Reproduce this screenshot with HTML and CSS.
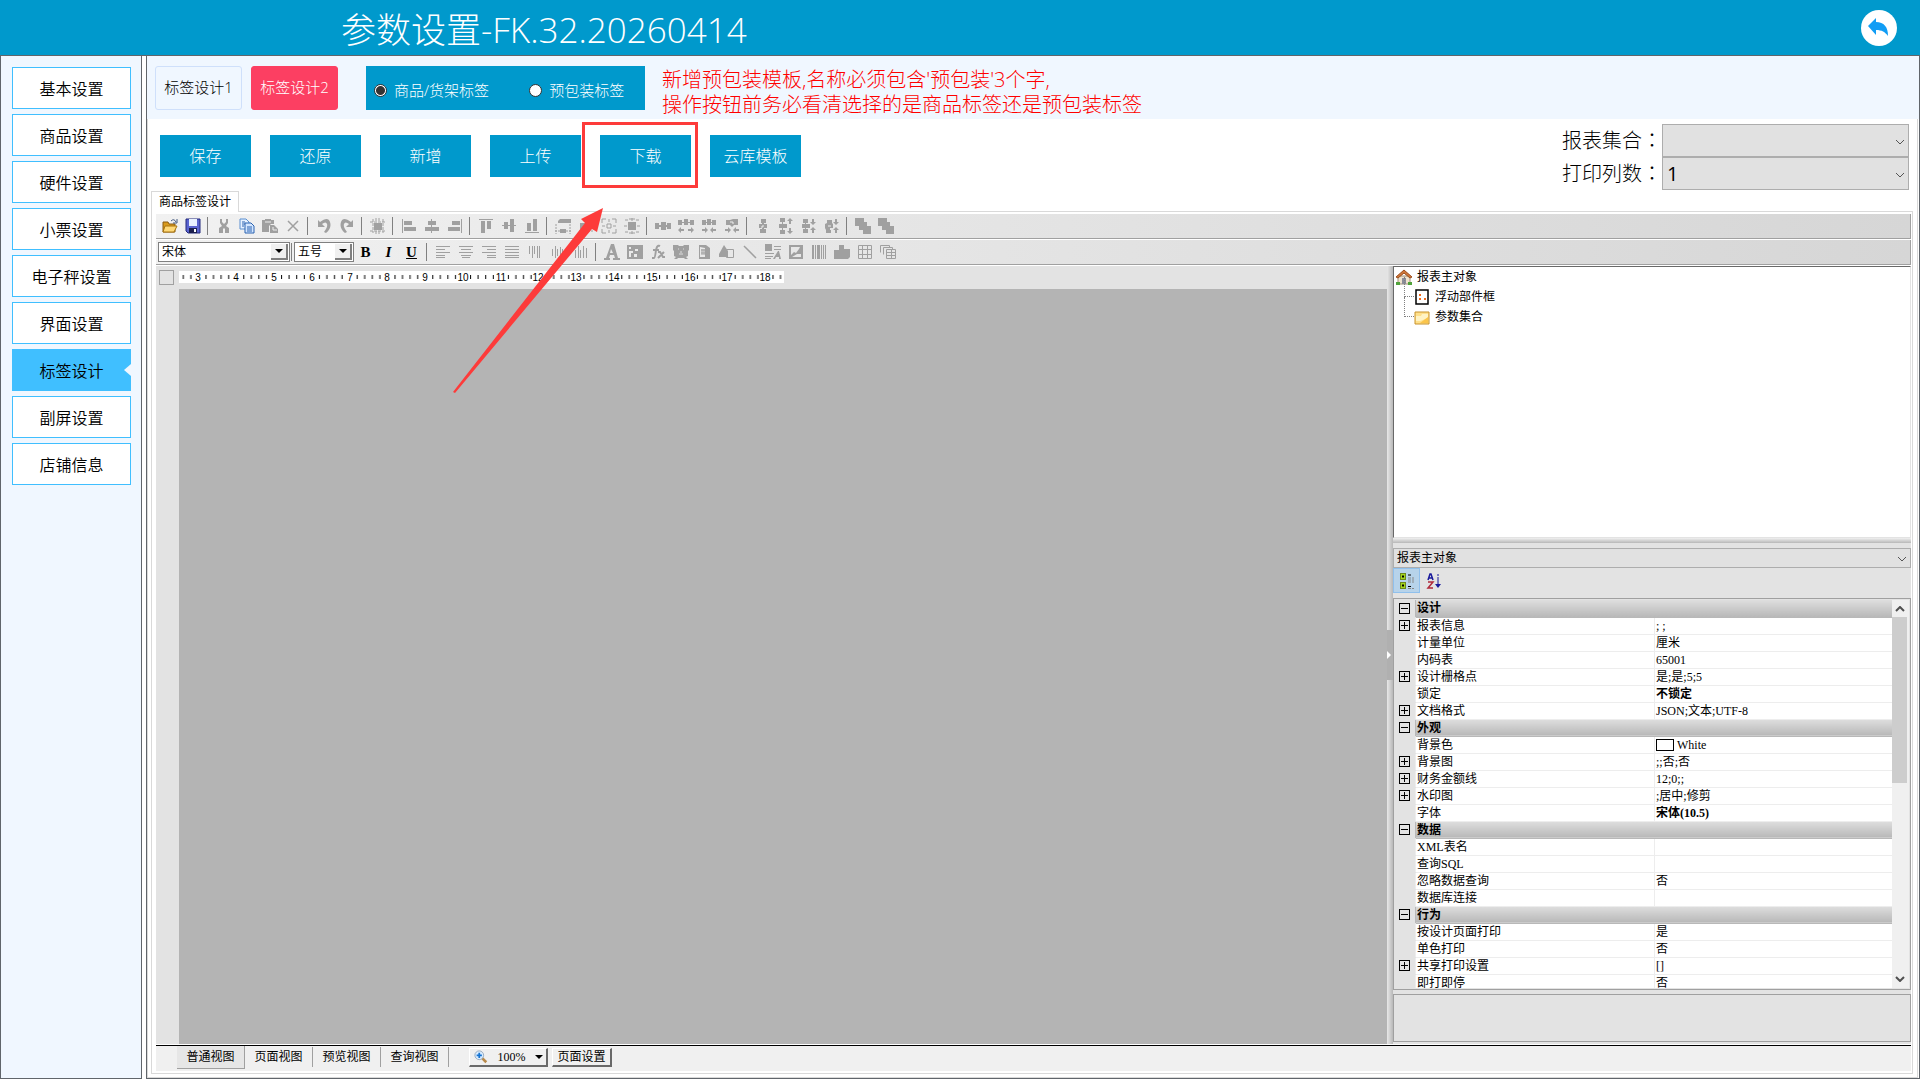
FILE: index.html
```html
<!DOCTYPE html>
<html lang="zh-CN">
<head>
<meta charset="utf-8">
<title>参数设置</title>
<link rel="stylesheet" href="styles.css">
</head>
<body>
<svg class="defs" aria-hidden="true">
  <defs>
    <symbol id="open" viewBox="0 0 16 16"><path d="M1 4h5l1 2h6v8H1z" fill="#d99a1c" stroke="#8a5a10"/><path d="M3 8h12l-3 6H1z" fill="#ffd978" stroke="#a8740f"/><path d="M9 3q3-3 5 1m1-3v4h-4" fill="none" stroke="#44597e"/></symbol>
    <symbol id="save" viewBox="0 0 16 16"><path d="M1 1h14v14H3l-2-2z" fill="#5a64d0" stroke="#23297c"/><path d="M4 1h8v7H4z" fill="#e9f1ff"/><path d="M4 10h8v5H4z" fill="#1b1f4e"/><path d="M9 11h2v3H9z" fill="#fff"/></symbol>
    <symbol id="cut" viewBox="0 0 16 16"><path d="M4 1h2v3l2 2 2-2V1h2v4l-2 3 3 2v5h-4v-4l-1-1-1 1v4H3v-5l3-2-2-3z"/></symbol>
    <symbol id="copy" viewBox="0 0 16 16"><path d="M1 1h6l3 3v7H1z" fill="#e6f1ff" stroke="#5b8fd0"/><path d="M6 5h6l3 3v7H6z" fill="#d3e6ff" stroke="#2b62b0"/><path d="M3 4h3M3 6h3M3 8h2M8 9h5M8 11h5M8 13h5" stroke="#2b62b0"/></symbol>
    <symbol id="paste" viewBox="0 0 16 16"><path d="M0 2h3V1h6v1h3v4H9l-2 2v6H0z"/><path d="M8 7h4l4 4v4H8z"/><path d="M11 9v3h4M3 4h6" stroke="#eee" fill="none"/></symbol>
    <symbol id="del" viewBox="0 0 16 16"><path d="M3 3l10 10M13 3L3 13" stroke="#a0a0a0" stroke-width="1.5"/></symbol>
    <symbol id="undo" viewBox="0 0 16 16"><path d="M2 2v7h7L6 6q4-3 5 0t-3 8l2 1q6-5 4-11T4 4z"/></symbol>
    <symbol id="redo" viewBox="0 0 16 16"><path d="M14 2v7H7l3-3Q6 3 5 6t3 8l-2 1Q0 10 2 4t10 0z"/></symbol>
    <symbol id="snap" viewBox="0 0 16 16"><path d="M4 5h8v7H4z"/><path d="M3 1v14M13 1v14M0 4h16M0 13h16M6 0v3M9 0v3M6 13v3M9 13v3" stroke="#a0a0a0" stroke-dasharray="3 1"/></symbol>
    <symbol id="al" viewBox="0 0 16 16"><path d="M1 1h1v14H1zM3 3h8v4H3zM3 9h12v4H3z"/></symbol>
    <symbol id="ac" viewBox="0 0 16 16"><path d="M7 1h1v14H7zM4 3h8v4H4zM1 9h14v4H1z"/></symbol>
    <symbol id="ar" viewBox="0 0 16 16"><path d="M14 1h1v14h-1zM5 3h8v4H5zM1 9h12v4H1z"/></symbol>
    <symbol id="at" viewBox="0 0 16 16"><path d="M1 1h14v1H1zM3 3h4v12H3zM9 3h4v8H9z"/></symbol>
    <symbol id="am" viewBox="0 0 16 16"><path d="M1 7h14v1H1zM3 4h4v7H3zM9 1h4v13H9z"/></symbol>
    <symbol id="ab" viewBox="0 0 16 16"><path d="M1 14h14v1H1zM3 5h4v8H3zM9 1h4v12H9z"/></symbol>
    <symbol id="w1" viewBox="0 0 16 16"><path d="M3 3l2-2h11v4H3zM5 11h6v4H5z"/><path d="M1 6v10M15 6v10M0 13h5M11 13h5" stroke="#a0a0a0" stroke-dasharray="2 1"/></symbol>
    <symbol id="w2" viewBox="0 0 16 16"><path d="M6 1h4v2H6zM2 5h12v6H2z"/><path d="M1 13h14" stroke="#a0a0a0" stroke-dasharray="2 1"/></symbol>
    <symbol id="w3" viewBox="0 0 16 16"><path d="M1 5V1h4M11 1h4v4M15 11v4h-4M5 15H1v-4M6 6h4v4H6zM8 1v3M8 12v3M1 8h3M12 8h3" fill="none" stroke="#a0a0a0"/></symbol>
    <symbol id="w4" viewBox="0 0 16 16"><path d="M4 4h8v8H4z"/><path d="M1 2h3M12 2h3M1 14h3M12 14h3M8 0v3M8 13v3M0 8h3M13 8h3M5 1h6M5 15h6" stroke="#a0a0a0"/></symbol>
    <symbol id="h1" viewBox="0 0 16 16"><path d="M0 5h4v2h2V4h5v3h1V5h4v6h-4V9h-1v3H6V9H4v2H0z"/></symbol>
    <symbol id="h2" viewBox="0 0 16 16"><path d="M0 2h4v2h2V1h4v3h2V2h4v5h-4V5h-2v2H6V5H4v2H0zM0 12l3-3v2h3v2H3v2zM16 12l-3-3v2h-3v2h3v2z"/></symbol>
    <symbol id="h3" viewBox="0 0 16 16"><path d="M1 2h4v2h1V1h4v3h1V2h4v5h-4V5h-1v2H6V5H5v2H1zM7 12L4 9v2H1v2h3v2zM9 12l3-3v2h3v2h-3v2z"/></symbol>
    <symbol id="h4" viewBox="0 0 16 16"><path d="M2 2h4l3-1h5v6h-4l-2 2-2-2H2zM7 12L4 9v2H1v2h3v2zM9 12l3-3v2h3v2h-3v2z"/><path d="M6 4h3v2" fill="none" stroke="#eee"/></symbol>
    <symbol id="v1" viewBox="0 0 16 16"><path d="M6 1h5v4H9v1h3v4H9v1h2v4H5v-4h2v-1H4V6h3V5H6z"/><path d="M8 7v2H6" fill="none" stroke="#eee"/></symbol>
    <symbol id="v2" viewBox="0 0 16 16"><path d="M2 0h5v4H5v2h4v4H5v2h2v4H2v-4h2v-2H1V6h3V4H2zM12 0l3 3h-2v3h-2V3H9zM12 16l3-3h-2v-3h-2v3H9z"/></symbol>
    <symbol id="v3" viewBox="0 0 16 16"><path d="M2 1h5v4H5v1h4v4H5v1h2v4H2v-4h2v-1H1V6h3V5H2zM12 7l3-3h-2V1h-2v3H9zM12 9l3 3h-2v3h-2v-3H9z"/></symbol>
    <symbol id="v4" viewBox="0 0 16 16"><path d="M3 2h5v3l1 1v4H6v2h1v3H2v-3l-1-2V6l2-1zM12 7l3-3h-2V1h-2v3H9zM12 9l3 3h-2v3h-2v-3H9z"/><path d="M4 8h3" stroke="#eee"/></symbol>
    <symbol id="z1" viewBox="0 0 16 16"><path d="M0 0h9v4h3v4h4v8H8v-4H4V8H0z"/></symbol>
    <symbol id="t1" viewBox="0 0 16 16"><path d="M1 2h14v1H1zM1 5h9v1H1zM1 8h14v1H1zM1 11h9v1H1zM1 13h9v1H1z"/></symbol>
    <symbol id="t2" viewBox="0 0 16 16"><path d="M1 2h14v1H1zM3 5h10v1H3zM1 8h14v1H1zM3 11h10v1H3zM4 13h8v1H4z"/></symbol>
    <symbol id="t3" viewBox="0 0 16 16"><path d="M1 2h14v1H1zM6 5h9v1H6zM1 8h14v1H1zM6 11h9v1H6zM6 13h9v1H6z"/></symbol>
    <symbol id="t4" viewBox="0 0 16 16"><path d="M1 2h14v1H1zM1 5h14v1H1zM1 8h14v1H1zM1 11h14v1H1zM1 13h14v1H1z"/></symbol>
    <symbol id="t5" viewBox="0 0 16 16"><path d="M2 2h1v8H2zM5 2h1v12H5zM7 2h1v8H7zM10 2h1v12h-1zM12 2h1v12h-1z"/></symbol>
    <symbol id="t6" viewBox="0 0 16 16"><path d="M2 5h1v7H2zM5 2h1v12H5zM7 5h1v7H7zM10 3h1v11h-1zM12 5h1v7h-1z"/></symbol>
    <symbol id="t7" viewBox="0 0 16 16"><path d="M2 6h1v8H2zM5 2h1v12H5zM7 6h1v8H7zM10 2h1v12h-1zM13 4h1v10h-1z"/></symbol>
    <symbol id="o1" viewBox="0 0 16 16"><path d="M7 0h3l4 14h2v2h-7v-2h2l-1-3H6l-1 3h1v2H0v-2h2zM7 5L6 9h3z" fill-rule="evenodd"/></symbol>
    <symbol id="o2" viewBox="0 0 16 16"><path d="M0 1h16v14H0zM2 3v2h2V3zM2 7v6h2V9h2V7zM8 5v2h3V5zM7 10v3h3v-3z" fill-rule="evenodd"/></symbol>
    <symbol id="o3" viewBox="0 0 16 16"><path d="M2 14h2q1 0 2-8l1-3q1-2 3-1M3 6h6M8 8h2l3 5h2M14 8l-6 6" fill="none" stroke="#a0a0a0" stroke-width="2"/></symbol>
    <symbol id="o4" viewBox="0 0 16 16"><path d="M0 1h5l1 1h4l1-1h5v5l-1 1v5l-2 1 2 2h-3l-1-1H5l-1 1H1l2-2-2-1V7L0 6z"/><path d="M5 5h1M10 5h1M8 7v2M6 10h4" stroke="#ddd"/></symbol>
    <symbol id="o5" viewBox="0 0 16 16"><path d="M3 1h7l4 3v11H3zM4 3v10h5V4z" fill-rule="evenodd"/><path d="M5 6h4M5 9h4M6 5v6M8 5v6" stroke="#a0a0a0"/></symbol>
    <symbol id="o6" viewBox="0 0 16 16"><path d="M5 1l4 6v6H0v-3z"/><path d="M7.500 5.500h7v8h-7z" fill="none" stroke="#a0a0a0"/></symbol>
    <symbol id="o7" viewBox="0 0 16 16"><path d="M2 2l12 12" stroke="#a0a0a0" stroke-width="1.500"/></symbol>
    <symbol id="o8" viewBox="0 0 16 16"><path d="M0 0h7v7H0zM9 2h7v1H9zM9 5h7v1H9zM0 9h9v1H0zM0 12h8v1H0zM0 15h6v-1H0zM13 7h1l2 8h-2v-2h-3l-1 2H8z"/></symbol>
    <symbol id="o9" viewBox="0 0 16 16"><path d="M1 1h14v14H1zM3 3v8l3-3 2 1 3-4 1-2zM4 13h9v-3h-4z" fill-rule="evenodd"/></symbol>
    <symbol id="o10" viewBox="0 0 16 16"><path d="M1 1h2v14H1zM4 1h1v14H4zM6 1h3v14H6zM10 1h1v14h-1zM12 1h1v14h-1zM14 1h1v14h-1z"/></symbol>
    <symbol id="o11" viewBox="0 0 16 16"><path d="M5 1h5v4h6v8l-2 2H0V6h5z"/></symbol>
    <symbol id="o12" viewBox="0 0 16 16"><path d="M1.500 1.500h13v13h-13zM1.500 5.500h13M1.500 10.500h13M5.500 1.500v13M10.500 1.500v13" fill="none" stroke="#a0a0a0"/></symbol>
    <symbol id="o13" viewBox="0 0 16 16"><path d="M.5 8.500v-7h9v2M3.500 10.500v-7h9v2M6.500 5.500h9v9h-9zM6.500 8.500h9M6.500 11.500h9M11.500 5.500v9" fill="none" stroke="#a0a0a0"/></symbol>
    <symbol id="chev" viewBox="0 0 10 6"><path d="M1 1l4 4 4-4" fill="none" stroke="#555"/></symbol>
    <symbol id="tri" viewBox="0 0 8 4"><path d="M0 0h8L4 4z" fill="#000"/></symbol>
  </defs>
</svg>

<div class="app">
  <header class="header">
    <h1>参数设置-FK.32.20260414</h1>
    <button class="back" aria-label="返回"><svg viewBox="0 0 36 36"><circle cx="18" cy="18" r="18" fill="#fff"/><path d="M7 16l8-8v4c8 0 12 5 12 14-3-4-6-6-12-6v5z" fill="#119df5"/></svg></button>
  </header>

  <div class="body">
    <nav class="side">
      <button>基本设置</button>
      <button>商品设置</button>
      <button>硬件设置</button>
      <button>小票设置</button>
      <button>电子秤设置</button>
      <button>界面设置</button>
      <button class="on">标签设计</button>
      <button>副屏设置</button>
      <button>店铺信息</button>
    </nav>

    <main class="main">
      <div class="top">
        <button class="tag">标签设计1</button>
        <button class="tag tag-on">标签设计2</button>
        <div class="kinds">
          <label><input type="radio" name="kind" checked>商品/货架标签</label>
          <label><input type="radio" name="kind">预包装标签</label>
        </div>
        <p class="notice">新增预包装模板,名称必须包含'预包装'3个字,<br>操作按钮前务必看清选择的是商品标签还是预包装标签</p>
      </div>

      <div class="work">
        <div class="actions">
          <button>保存</button>
          <button>还原</button>
          <button>新增</button>
          <button>上传</button>
          <div class="marked"><button>下载</button>
            <svg class="arrow" viewBox="0 0 152 188" aria-hidden="true"><path d="M150 1L144 25 139 22 2 186 0 185 132 16 128 12z" fill="#fd3b3a"/></svg>
          </div>
          <button>云库模板</button>
          <div class="options">
            <label for="set" lang="zh-TW">报表集合：</label>
            <div class="drop"><select id="set"><option></option></select><svg><use href="#chev"/></svg></div>
            <label for="cols" lang="zh-TW">打印列数：</label>
            <div class="drop"><select id="cols"><option>1</option></select><svg><use href="#chev"/></svg></div>
          </div>
        </div>

        <button class="sheet-tab">商品标签设计</button>
        <section class="sheet">
          <div class="bar">
            <button aria-label="打开"><svg><use href="#open"/></svg></button>
            <button aria-label="保存"><svg><use href="#save"/></svg></button><i></i>
            <button aria-label="剪切"><svg><use href="#cut"/></svg></button>
            <button aria-label="复制"><svg><use href="#copy"/></svg></button>
            <button aria-label="粘贴"><svg><use href="#paste"/></svg></button>
            <button aria-label="删除"><svg><use href="#del"/></svg></button><i></i>
            <button aria-label="撤销"><svg><use href="#undo"/></svg></button>
            <button aria-label="重做"><svg><use href="#redo"/></svg></button><i></i>
            <button aria-label="对齐网格"><svg><use href="#snap"/></svg></button><i></i>
            <button aria-label="左对齐"><svg><use href="#al"/></svg></button>
            <button aria-label="水平居中"><svg><use href="#ac"/></svg></button>
            <button aria-label="右对齐"><svg><use href="#ar"/></svg></button><i></i>
            <button aria-label="顶对齐"><svg><use href="#at"/></svg></button>
            <button aria-label="垂直居中"><svg><use href="#am"/></svg></button>
            <button aria-label="底对齐"><svg><use href="#ab"/></svg></button><i></i>
            <button aria-label="等宽"><svg><use href="#w1"/></svg></button>
            <button aria-label="等高"><svg><use href="#w2"/></svg></button>
            <button aria-label="等大小"><svg><use href="#w3"/></svg></button>
            <button aria-label="适应网格"><svg><use href="#w4"/></svg></button><i></i>
            <button aria-label="水平等距"><svg><use href="#h1"/></svg></button>
            <button aria-label="增加水平间距"><svg><use href="#h2"/></svg></button>
            <button aria-label="减少水平间距"><svg><use href="#h3"/></svg></button>
            <button aria-label="移除水平间距"><svg><use href="#h4"/></svg></button><i></i>
            <button aria-label="垂直等距"><svg><use href="#v1"/></svg></button>
            <button aria-label="增加垂直间距"><svg><use href="#v2"/></svg></button>
            <button aria-label="减少垂直间距"><svg><use href="#v3"/></svg></button>
            <button aria-label="移除垂直间距"><svg><use href="#v4"/></svg></button><i></i>
            <button aria-label="置前"><svg><use href="#z1"/></svg></button>
            <button aria-label="置后"><svg><use href="#z1"/></svg></button>
          </div>
          <div class="bar">
            <div class="combo combo-font"><select aria-label="字体"><option>宋体</option></select><span><svg><use href="#tri"/></svg></span></div>
            <i class="slim"></i>
            <div class="combo combo-size"><select aria-label="字号"><option>五号</option></select><span><svg><use href="#tri"/></svg></span></div>
            <button class="glyph"><b>B</b></button>
            <button class="glyph"><b><em>I</em></b></button>
            <button class="glyph"><b><u>U</u></b></button><i></i>
            <button aria-label="文本左对齐"><svg><use href="#t1"/></svg></button>
            <button aria-label="文本居中"><svg><use href="#t2"/></svg></button>
            <button aria-label="文本右对齐"><svg><use href="#t3"/></svg></button>
            <button aria-label="两端对齐"><svg><use href="#t4"/></svg></button>
            <button aria-label="文本靠上"><svg><use href="#t5"/></svg></button>
            <button aria-label="文本居中间"><svg><use href="#t6"/></svg></button>
            <button aria-label="文本靠下"><svg><use href="#t7"/></svg></button><i></i>
            <button aria-label="静态文本"><svg><use href="#o1"/></svg></button>
            <button aria-label="字段"><svg><use href="#o2"/></svg></button>
            <button aria-label="公式"><svg><use href="#o3"/></svg></button>
            <button aria-label="系统变量"><svg><use href="#o4"/></svg></button>
            <button aria-label="页码"><svg><use href="#o5"/></svg></button>
            <button aria-label="形状"><svg><use href="#o6"/></svg></button>
            <button aria-label="线条"><svg><use href="#o7"/></svg></button>
            <button aria-label="富文本"><svg><use href="#o8"/></svg></button>
            <button aria-label="图像"><svg><use href="#o9"/></svg></button>
            <button aria-label="条形码"><svg><use href="#o10"/></svg></button>
            <button aria-label="图表"><svg><use href="#o11"/></svg></button>
            <button aria-label="表格"><svg><use href="#o12"/></svg></button>
            <button aria-label="子报表"><svg><use href="#o13"/></svg></button>
          </div>

          <div class="design">
            <div class="stage">
              <div class="ruler-row">
                <span class="corner"></span>
                <svg class="ruler" width="605" height="12" aria-hidden="true">
                  <defs><pattern id="ticks" x="19.5" width="37.8" height="12" patternUnits="userSpaceOnUse"><path d="M7.500 4v4M15 4v4M22.600 4v4M30.200 4v4" stroke="#000"/></pattern></defs>
                  <rect width="605" height="12" fill="#fff"/>
                  <rect width="605" height="12" fill="url(#ticks)"/>
                  <g><text x="19" y="10">3</text><text x="57" y="10">4</text><text x="95" y="10">5</text><text x="133" y="10">6</text><text x="171" y="10">7</text><text x="208" y="10">8</text><text x="246" y="10">9</text><text x="284" y="10">10</text><text x="322" y="10">11</text><text x="359" y="10">12</text><text x="397" y="10">13</text><text x="435" y="10">14</text><text x="473" y="10">15</text><text x="511" y="10">16</text><text x="548" y="10">17</text><text x="586" y="10">18</text></g>
                </svg>
              </div>
              <div class="canvas"></div>
            </div>
            <div class="split"><span><svg viewBox="0 0 4 8"><path d="M0 0l4 4-4 4z" fill="#fff"/></svg></span></div>
            <aside class="props">
              <ul class="tree">
                <li><svg viewBox="0 0 16 16"><path d="M2 7h12v8H2z" fill="#efe3cf" stroke="#a09078"/><path d="M0 8l8-7 8 7-2 1-6-5-6 5z" fill="#d0783a" stroke="#9c4d1c"/><path d="M6 9h4v6H6z" fill="#8d8d9a"/><path d="M0 13h4v3H0zM12 13h4v3h-4z" fill="#4fa23a"/></svg>报表主对象</li>
                <li class="leaf"><svg viewBox="0 0 16 16"><path d="M2 1h12v14H2z" fill="#fff" stroke="#000" stroke-width="1.5"/><path d="M5 5h2v2H5zM5 9h2v2H5zM10 9h2v2h-2z" fill="#f26a1b"/></svg>浮动部件框</li>
                <li class="leaf"><svg viewBox="0 0 16 16"><path d="M1 3h14v12H1z" fill="#ffe08a" stroke="#c8922a"/><path d="M2 7h5l1-2h6v4l-8 3H2z" fill="#fff3c4"/><path d="M14 8v6H6z" fill="#fbc54a"/></svg>参数集合</li>
              </ul>
              <div class="hsplit"></div>
              <div class="drop drop-small"><select aria-label="对象"><option>报表主对象</option></select><svg><use href="#chev"/></svg></div>
              <div class="sort">
                <button class="sel" aria-label="分类"><svg viewBox="0 0 16 16"><path d="M1 0h6v7H1zM1 9h6v7H1z" fill="#6c8a1c"/><path d="M2 1h4v5H2zM2 10h4v5H2z" fill="#a4d61e"/><path d="M4 2v3M3 3.500h2M4 11v3M3 12.500h2" stroke="#000"/><path d="M9 2h3M9 13.500h3" stroke="#000"/><path d="M9 5h6M9 7h6M9 9h6M9 15.500h6" stroke="#888" stroke-dasharray="3 1"/></svg></button>
                <button aria-label="字母排序"><svg viewBox="0 0 16 16"><path d="M2 7l2-6h1l2 6M3 5h3" fill="none" stroke="#1a1a9c" stroke-width="1.500"/><path d="M2 9h5l-5 6h5" fill="none" stroke="#b02a3a" stroke-width="1.500"/><path d="M12 1v2M12 4v9" stroke="#1a1a9c"/><path d="M9 11h6l-3 4z" fill="#1a1a9c"/></svg></button>
              </div>
              <div class="grid">
                <div class="rows">
                  <table>
                    <colgroup><col class="c-mark"><col class="c-name"><col></colgroup>
                    <tbody>
                      <tr class="cat"><td><span class="box"></span></td><th colspan="2">设计</th></tr>
                      <tr><td><span class="box plus"></span></td><td>报表信息</td><td>; ;</td></tr>
                      <tr><td></td><td>计量单位</td><td>厘米</td></tr>
                      <tr><td></td><td>内码表</td><td>65001</td></tr>
                      <tr><td><span class="box plus"></span></td><td>设计栅格点</td><td>是;是;5;5</td></tr>
                      <tr><td></td><td>锁定</td><td><b>不锁定</b></td></tr>
                      <tr><td><span class="box plus"></span></td><td>文档格式</td><td>JSON;文本;UTF-8</td></tr>
                      <tr class="cat"><td><span class="box"></span></td><th colspan="2">外观</th></tr>
                      <tr><td></td><td>背景色</td><td><span class="swatch"></span>White</td></tr>
                      <tr><td><span class="box plus"></span></td><td>背景图</td><td>;;否;否</td></tr>
                      <tr><td><span class="box plus"></span></td><td>财务金额线</td><td>12;0;;</td></tr>
                      <tr><td><span class="box plus"></span></td><td>水印图</td><td>;居中;修剪</td></tr>
                      <tr><td></td><td>字体</td><td><b>宋体(10.5)</b></td></tr>
                      <tr class="cat"><td><span class="box"></span></td><th colspan="2">数据</th></tr>
                      <tr><td></td><td>XML表名</td><td></td></tr>
                      <tr><td></td><td>查询SQL</td><td></td></tr>
                      <tr><td></td><td>忽略数据查询</td><td>否</td></tr>
                      <tr><td></td><td>数据库连接</td><td></td></tr>
                      <tr class="cat"><td><span class="box"></span></td><th colspan="2">行为</th></tr>
                      <tr><td></td><td>按设计页面打印</td><td>是</td></tr>
                      <tr><td></td><td>单色打印</td><td>否</td></tr>
                      <tr><td><span class="box plus"></span></td><td>共享打印设置</td><td>[]</td></tr>
                      <tr><td></td><td>即打即停</td><td>否</td></tr>
                    </tbody>
                  </table>
                </div>
                <div class="scroll">
                  <svg viewBox="0 0 10 6"><path d="M1 5l4-4 4 4" fill="none" stroke="#505050" stroke-width="2"/></svg>
                  <span></span>
                  <svg viewBox="0 0 10 6"><path d="M1 1l4 4 4-4" fill="none" stroke="#505050" stroke-width="2"/></svg>
                </div>
              </div>
              <div class="hint"></div>
            </aside>
          </div>

          <footer class="foot">
            <button class="view view-on">普通视图</button>
            <button class="view">页面视图</button>
            <button class="view">预览视图</button>
            <button class="view">查询视图</button>
            <button class="raised zoom"><svg class="lens" viewBox="0 0 16 16"><path d="M9 9l5 5" stroke="#b98a4a" stroke-width="3"/><circle cx="6" cy="6" r="5" fill="#d9ecff" stroke="#8fa3b8"/><path d="M6 3v6M3 6h6" stroke="#1673d1" stroke-width="2"/></svg><span>100%</span><svg class="tri"><use href="#tri"/></svg></button>
            <button class="raised">页面设置</button>
          </footer>
        </section>
      </div>
    </main>
  </div>
</div>
</body>
</html>
```
FILE: styles.css
```css
*, *::before, *::after { box-sizing: border-box; }

body {
  margin: 0;
  background: #fff;
  color: #000;
  font: 12px/16px "Liberation Serif", "Noto Sans CJK SC", serif;
}

button, select, input { font: inherit; color: inherit; margin: 0; padding: 0; border: 0; background: none; border-radius: 0; }
button { white-space: nowrap; }
.defs { position: absolute; width: 0; height: 0; }

.app { height: 100vh; min-height: 800px; display: flex; flex-direction: column; }

.header {
  flex: none;
  height: 56px;
  padding: 0 23px 0 341px;
  display: flex;
  align-items: center;
  justify-content: space-between;
  background: #0099cc;
  border-bottom: 1px solid #60656b;
  color: #fff;
}
.header h1 { margin: 4px 0 0; font: 300 35px/48px "Open Sans", "Noto Sans CJK SC", sans-serif; }
.back { width: 36px; height: 36px; }
.back svg { display: block; width: 36px; height: 36px; }

.body { flex: 1; min-height: 0; display: flex; gap: 4px; padding-bottom: 1px; }

/* left navigation */
.side {
  flex: none;
  width: 142px;
  padding: 11px 10px 0 11px;
  display: flex;
  flex-direction: column;
  gap: 5px;
  background: #f0f7ff;
  border: 1px solid #60656b;
  border-top: 0;
}
.side button {
  position: relative;
  height: 42px;
  padding-bottom: 1px;
  background: #fff;
  border: 1px solid #40bfff;
  font: 350 16px/24px "Noto Sans CJK SC", sans-serif;
}
.side .on { background: #40bfff; }
.side .on::after {
  content: "";
  position: absolute;
  right: -1px;
  top: 14px;
  border: 6px solid transparent;
  border-left: 0;
  border-right: 7px solid #f0f7ff;
}

.main { flex: 1; min-width: 0; display: flex; flex-direction: column; border: 1px solid #60656b; border-top: 0; }

.top {
  flex: none;
  height: 63px;
  padding: 10px 8px 0;
  display: flex;
  align-items: flex-start;
  background: #f0f7ff;
  font: 300 15px/24px "Open Sans", "Noto Sans CJK SC", sans-serif;
}
.tag { width: 87px; height: 44px; margin-right: 9px; padding-bottom: 2px; border: 1px solid #cfe0fb; border-radius: 3px; }
.tag-on { background: #fc3f62; border-color: #fc3f62; color: #fff; }
.kinds {
  width: 279px;
  height: 44px;
  margin: 0 17px 0 19px;
  padding: 4px 8px 0;
  display: flex;
  gap: 40px;
  align-items: center;
  background: #0099cc;
  color: #fff;
}
.kinds label { display: flex; align-items: center; gap: 7px; white-space: nowrap; }
.kinds input { appearance: none; width: 13px; height: 13px; border: 1px solid #333; border-radius: 50%; background: #fff; }
.kinds input:checked { background: radial-gradient(circle, #333 0 4px, #fff 5px); }
.notice { margin: 1px 0 0; color: #f00; font: 300 20px/25px "Open Sans", "Noto Sans CJK SC", sans-serif; }

/* work area */
.work {
  flex: 1;
  min-height: 0;
  margin-right: 1px;
  padding: 0 4px 3px 3px;
  display: flex;
  flex-direction: column;
  background: #fff;
  border: 1px solid #d9d9d9;
  border-top: 0;
}
.actions { flex: none; height: 72px; padding: 16px 4px 0 9px; display: flex; align-items: flex-start; gap: 19px; }
.actions button { width: 91px; height: 42px; padding-bottom: 2px; background: #0099cc; color: #fff; font: 300 16px/24px "Noto Sans CJK SC", sans-serif; }
.marked { position: relative; }
.marked::after { content: ""; position: absolute; left: -18px; top: -13px; width: 116px; height: 66px; border: 3px solid #fd3b3a; pointer-events: none; }
.arrow { position: absolute; z-index: 2; left: -147px; top: 72px; width: 152px; height: 188px; pointer-events: none; }
.options {
  margin: -11px 0 0 auto;
  display: grid;
  grid-template-columns: 100px 247px;
  align-items: center;
  font: 300 20px/26px "Open Sans", "Noto Sans CJK TC", sans-serif;
}
.drop { position: relative; }
.drop select { display: block; width: 100%; height: 33px; padding-left: 4px; appearance: none; background: #e1e1e1; border: 1px solid #adadad; font-weight: 400; }
.drop svg { position: absolute; right: 4px; top: 50%; width: 10px; height: 6px; margin-top: -2px; pointer-events: none; }

.sheet-tab { flex: none; align-self: flex-start; width: 88px; height: 21px; margin-bottom: -1px; z-index: 1; background: #fff; border: 1px solid #d9d9d9; border-bottom: 0; }
.sheet { flex: 1; min-height: 0; padding: 2px 1px 2px 4px; display: flex; flex-direction: column; border: 1px solid #d9d9d9; }

.bar {
  flex: none;
  height: 25px;
  margin-bottom: 1px;
  padding-left: 2px;
  display: flex;
  align-items: center;
  background: linear-gradient(90deg, #f1f1f1, #d6d6d6);
  border: 1px solid #a0a0a0;
  border-width: 0 1px 1px 0;
}
.bar button { width: 23px; height: 22px; display: flex; align-items: center; justify-content: center; }
.bar svg { width: 16px; height: 16px; fill: #a0a0a0; }
.bar i { width: 8px; height: 18px; display: flex; }
.bar i::before { content: ""; margin-left: 3px; width: 1px; background: #808080; }
.bar i.slim { width: 4px; }
.bar i.slim::before { margin-left: 1px; }
.bar .glyph { font-size: 15px; }
.combo { position: relative; }
.combo-font { width: 132px; }
.combo-size { width: 60px; }
.combo select { display: block; width: 100%; height: 20px; padding-left: 3px; appearance: none; background: #fff; border: 1px solid #808080; }
.combo span {
  position: absolute;
  right: 2px;
  top: 2px;
  width: 17px;
  height: 16px;
  display: flex;
  align-items: center;
  justify-content: center;
  background: #f0f0f0;
  border: 1px solid #808080;
  border-width: 0 2px 2px 0;
  pointer-events: none;
}
.combo svg, .tri { width: 8px; height: 4px; }

/* designer */
.design { flex: 1; min-height: 0; display: flex; background: #e3e3e3; }
.stage { flex: 1; min-width: 0; display: flex; flex-direction: column; }
.ruler-row { flex: none; height: 23px; padding: 0 0 1px 3px; display: flex; align-items: center; gap: 5px; }
.corner { width: 15px; height: 15px; border: 1px solid #a0a0a0; }
.ruler text { font: 10px "Liberation Sans", sans-serif; text-anchor: middle; }
.canvas { flex: 1; margin-left: 23px; background: #b4b4b4; }
.split { flex: none; width: 6px; display: flex; align-items: center; background: linear-gradient(90deg, #e8e8e8, #b8b8b8); }
.split span { width: 6px; height: 50px; display: flex; align-items: center; background: #b0b0b0; }
.split svg { width: 4px; height: 8px; }

.props { flex: none; width: 518px; display: flex; flex-direction: column; }
.tree { flex: none; height: 272px; margin: 0; padding: 0 2px; list-style: none; background: #fff; border: 1px solid #e3e3e3; border-color: #696969 #e3e3e3 #e3e3e3 #696969; }
.tree li { height: 20px; display: flex; align-items: center; gap: 5px; }
.tree svg { width: 16px; height: 16px; }
.tree .leaf { margin-left: 8px; }
.tree .leaf::before { content: ""; width: 10px; height: 20px; margin: -20px -5px 0 0; border: 1px dotted #808080; border-width: 0 0 1px 1px; }
.hsplit { flex: none; height: 5px; margin-bottom: 5px; background: linear-gradient(#f0f0f0, #b8b8b8); }
.drop-small select { height: 20px; padding-left: 3px; }
.sort { flex: none; height: 30px; display: flex; align-items: flex-start; }
.sort button { width: 27px; height: 25px; display: flex; align-items: center; justify-content: center; }
.sort .sel { background: #b7d3ea; border: 1px solid #90c0ec; }
.sort svg { width: 16px; height: 16px; }

.grid { flex: 1; min-height: 0; padding: 1px; display: flex; border: 1px solid #a0a0a0; }
.rows { flex: 1; min-width: 0; overflow: hidden; }
.rows table { width: 100%; table-layout: fixed; border-collapse: collapse; }
.c-mark { width: 20px; }
.c-name { width: 239px; }
.rows tr { height: 17px; background: #fff; }
.rows td, .rows th { height: 17px; padding: 0 0 0 1px; border: 1px solid #ededed; border-width: 0 0 1px 1px; text-align: left; line-height: 16px; white-space: nowrap; }
.rows td:first-child { padding: 0 0 0 3px; background: #e3e3e3; border-color: #e3e3e3; }
.rows .cat th { background: linear-gradient(#dedede, #b8b8b8); border-color: #b8b8b8; }
.box { position: relative; display: block; width: 11px; height: 11px; border: 1px solid #000; }
.box::before, .plus::after { content: ""; position: absolute; left: 1px; top: 4px; width: 7px; height: 1px; background: #000; }
.plus::after { left: 4px; top: 1px; width: 1px; height: 7px; }
.swatch { display: inline-block; width: 18px; height: 12px; margin-right: 3px; border: 1px solid #000; vertical-align: -2px; }
.scroll { flex: none; width: 17px; padding: 6px 2px 6px 0; display: flex; flex-direction: column; align-items: center; background: #f0f0f0; }
.scroll span { width: 15px; height: 166px; margin: 5px 0 auto; background: #cdcdcd; }
.scroll svg { width: 10px; height: 6px; }
.hint { flex: none; height: 48px; margin: 4px 0 2px; border: 1px solid #a0a0a0; }

/* view switcher */
.foot { flex: none; height: 26px; padding-left: 21px; display: flex; align-items: flex-start; background: #f0f0f0; border-top: 1px solid #000; margin-top: 1px; }
.view { width: 68px; height: 20px; margin-top: 1px; border-right: 1px solid #a0a0a0; }
.view-on { height: 23px; margin-top: 0; background: #e6e6e6; border-bottom: 1px solid #a0a0a0; }
.raised { width: 60px; height: 19px; margin: 2px 0 0 4px; background: #f0f0f0; border: 1px solid #808080; border-color: #fff #696969 #696969 #fff; border-width: 1px 2px 2px 1px; line-height: 16px; }
.zoom { width: 79px; margin-left: 20px; padding: 0 3px 0 4px; display: flex; align-items: center; justify-content: space-between; }
.lens { width: 14px; height: 14px; }
```
